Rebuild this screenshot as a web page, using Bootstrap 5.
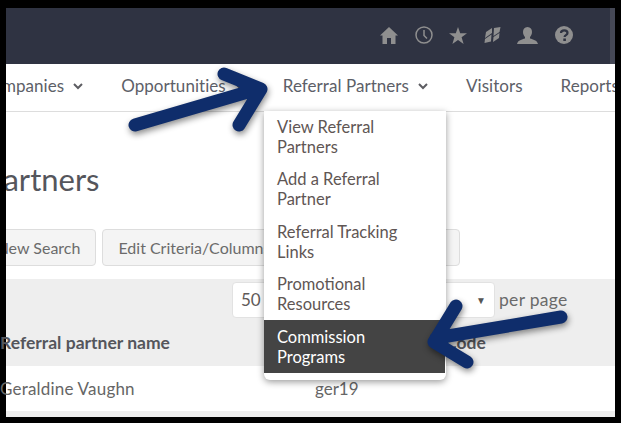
<!DOCTYPE html>
<html lang="en"><head><meta charset="utf-8"><title>Referral Partners</title>
<link href="https://cdn.jsdelivr.net/npm/bootstrap@5.3.0/dist/css/bootstrap.min.css" rel="stylesheet">
<style>
html,body{height:423px;overflow:hidden;margin:0}
body{background:#000;font-family:"Lato","Liberation Sans",sans-serif;font-size:16px;color:#5f5a58}
.shot{position:relative;margin:8px 6px 0;width:609px;height:409px;background:#fff;clip-path:inset(0 0 0 -6px)}
.shot::before{content:"";position:absolute;left:-6px;top:0;width:6px;height:409px;background:#000;z-index:1}
.topbar{height:56px;background:#2f3342;padding:0 37.500px 2px 0;gap:16.500px;border-right:5px solid #454856}
.topbar svg{fill:#8f8f8f;display:block}
.mainnav{height:48px;border-bottom:1px solid #ddd;margin-left:-25px;padding-bottom:3px;white-space:nowrap;color:#5d6068;font-size:17px;letter-spacing:.05px}
.mainnav .it{margin-right:38px;display:flex;align-items:center;gap:9px}
.chev{width:10px;height:7px;stroke:#5d5d62;stroke-width:2;fill:none}
.pagetitle{font-size:31px;font-weight:400;margin:49px 0 0 -135px;line-height:36px;color:#55565c;white-space:nowrap}
.toolbar{margin:32px 0 0 -57px;gap:5px;height:37px}
.tbtn{background:#f4f4f4;border:1px solid #ddd;border-radius:4px;padding:0 15px;font-size:16px;color:#6b6b6b;display:flex;align-items:center;white-space:nowrap}
.tbtn:first-child{margin-right:1px}
.tbtn:last-child{padding-right:16px}
.band{margin-top:13px;background:#eee;height:87px;position:relative}
.pager{padding:3px 0 0 226px;height:39px}
.pick{width:263px;height:36px;background:#fff;border:1px solid #e2e2e2;border-radius:4px;padding:0 8px;font-size:17px}
.pick i{font-style:normal;font-size:10px;color:#555}
.perpage{margin-left:4px;font-size:17.500px;letter-spacing:.3px;color:#6a6a6a}
.cols{padding-top:12px;font-weight:700;color:#55565c;font-size:17.500px;white-space:nowrap;position:relative;z-index:2}
.datacol1{width:315px;margin-left:-6px;flex:none}
.rowdata{height:45px;font-size:17px;letter-spacing:.2px;color:#666;position:relative;z-index:2}
.rowdata span+span{letter-spacing:0}
.stripe{height:6px;background:#eee}
.menu-drop{position:absolute;left:258px;top:103px;width:182px;height:269px;background:#fff;border-radius:0 0 6px 6px;box-shadow:0 2px 7px rgba(0,0,0,.4);font-size:16.500px;line-height:20px;z-index:3}
.menu-drop a{display:block;color:#5f5654;text-decoration:none;padding:6px 30px 6px 13px;height:52.300px}
.menu-drop a.on{background:#444;color:#fff;margin-right:1px;height:53px;padding-top:7px}
.arrows{position:absolute;left:0;top:0;pointer-events:none;z-index:4;filter:drop-shadow(1px 3px 3px rgba(0,0,0,.45))}
</style></head>
<body>
<div class="shot">
  <header class="topbar d-flex align-items-center justify-content-end">
    <svg width="18" height="17" viewBox="0 0 18 17"><path d="M9 0 18 8.500H15.500V17H11V11H7V17H2.500V8.500H0Z"/></svg>
    <svg width="18" height="18" viewBox="0 0 18 18"><circle cx="9" cy="9" r="8" fill="none" stroke="#8f8f8f" stroke-width="1.500"/><path d="M9 4V9.500L12 12.500" fill="none" stroke="#8f8f8f" stroke-width="1.500"/></svg>
    <svg width="18" height="17" viewBox="0 0 18 17"><path d="M9 0 11.200 6.200H18L12.600 10.200 14.600 17 9 13 3.400 17 5.400 10.200 0 6.200H6.800Z"/></svg>
    <svg width="17" height="16" viewBox="0 0 17 16"><path d="M2 5 8 1V6L1 11ZM10 1 16.500 0 15.500 5 9.500 9ZM1 12 7.500 7.500 7 14.500 0.500 16ZM9.500 10 15.500 6 15 11 9 15Z"/></svg>
    <svg width="21" height="17" viewBox="0 0 21 17"><path d="M10.500 0C13.500 0 15 2.200 15 5 15 7.500 13.800 9 13 10V11.500C16 12.500 20 13 21 17H0C1 13 5 12.500 8 11.500V10C7.200 9 6 7.500 6 5 6 2.200 7.500 0 10.500 0Z"/></svg>
    <svg width="18" height="18" viewBox="0 0 18 18"><circle cx="9" cy="9" r="9"/><path d="M6 7C6 3.500 12.500 3.500 12.500 7 12.500 9.300 9.600 9 9.600 11" fill="none" stroke="#2f3342" stroke-width="2.200"/><rect x="8.300" y="12.500" width="2.600" height="2.500" fill="#2f3342"/></svg>
  </header>
  <nav class="mainnav d-flex align-items-center">
    <span class="it">Companies <svg class="chev" viewBox="0 0 10 7"><path d="M1 1 5 5 9 1"/></svg></span>
    <span class="it">Opportunities <svg class="chev" viewBox="0 0 10 7"><path d="M1 1 5 5 9 1"/></svg></span>
    <span class="it">Referral Partners <svg class="chev" viewBox="0 0 10 7"><path d="M1 1 5 5 9 1"/></svg></span>
    <span class="it">Visitors</span>
    <span class="it">Reports</span>
  </nav>
  <h1 class="pagetitle">Referral Partners</h1>
  <div class="toolbar d-flex">
    <span class="tbtn">Run New Search</span>
    <span class="tbtn">Edit Criteria/Columns</span>
    <span class="tbtn">Export Results CSV</span>
  </div>
  <section class="band">
    <div class="pager d-flex align-items-center">
      <div class="pick d-flex align-items-center justify-content-between"><span>50</span><i>▼</i></div>
      <span class="perpage">per page</span>
    </div>
    <div class="cols d-flex"><span class="datacol1">Referral partner name</span><span style="margin-left:130px">Code</span></div>
  </section>
  <div class="rowdata d-flex align-items-center"><span class="datacol1">Geraldine Vaughn</span><span>ger19</span></div>
  <div class="stripe"></div>
  <div class="menu-drop">
    <a href="#">View Referral Partners</a>
    <a href="#">Add a Referral Partner</a>
    <a href="#">Referral Tracking Links</a>
    <a href="#">Promotional Resources</a>
    <a href="#" class="on">Commission Programs</a>
  </div>
  <svg class="arrows" width="609" height="409" viewBox="6 8 609 409" fill="none" stroke="#0f2d6b" stroke-width="13" stroke-linecap="round" stroke-linejoin="round">
    <path d="M135 125 258 89M224 74 261 89 239 125"/>
    <path d="M561 317 436 338M456 306 434 342 467 362"/>
  </svg>
</div>
</body></html>
